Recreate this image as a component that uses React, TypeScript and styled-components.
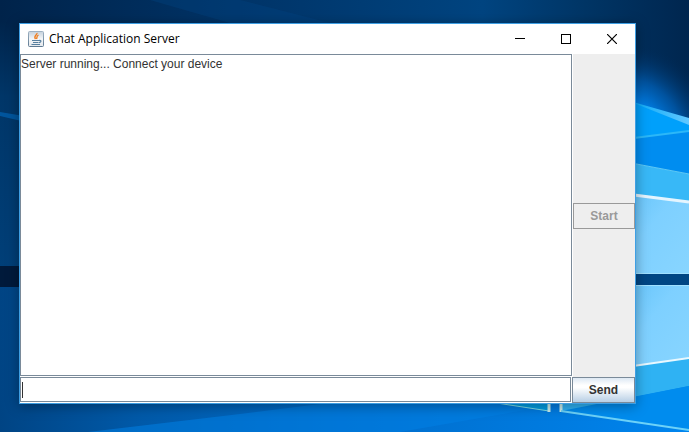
import React from "react";
import styled, { createGlobalStyle } from "styled-components";

const GlobalStyle = createGlobalStyle`
  *, *::before, *::after { box-sizing: border-box; }
  body { margin: 0; overflow: hidden; background: #003c7c; }
`;

const Desktop = styled.main`
  position: relative;
  display: flex;
  min-height: 100vh;
  padding: 23px 53px 28px 19px;
`;

const WallpaperSvg = styled.svg`
  position: absolute;
  inset: 0;
  width: 100%;
  height: 100%;
`;

const Window = styled.section`
  position: relative;
  flex: 1;
  display: flex;
  flex-direction: column;
  border: 1px solid #3e9fe4;
  background: #fff;
  box-shadow: 0 2px 12px rgba(0, 0, 0, 0.35);
`;

const TitleBar = styled.header`
  display: flex;
  align-items: center;
  height: 30px;
  padding-left: 8px;
`;

const Title = styled.h1`
  flex: 1;
  margin: 0 0 0 5px;
  color: #000;
  font: 400 12px/16px "Open Sans", "Noto Sans", sans-serif;
`;

const CaptionButton = styled.button`
  display: grid;
  place-items: center;
  width: 46px;
  height: 30px;
  padding: 0;
  border: 0;
  background: transparent;
`;

const Body = styled.div`
  flex: 1;
  display: flex;
  flex-direction: column;
`;

const ChatRow = styled.div`
  flex: 1;
  display: flex;
`;

const Log = styled.textarea`
  flex: 1;
  margin: 0 1px 1px 0;
  padding: 1px 0;
  border: 1px solid #7a8a99;
  border-radius: 0;
  outline: 0;
  resize: none;
  color: #333;
  background: #fff;
  font: 12px/16px "Liberation Sans", Arial, sans-serif;
`;

const SidePanel = styled.aside`
  display: flex;
  flex-direction: column;
  justify-content: center;
  width: 62px;
  background: #eee;
`;

const MessageForm = styled.form`
  display: flex;
  height: 26px;
`;

const Field = styled.div`
  position: relative;
  flex: 1;
  display: flex;
  padding: 0 1px 1px 0;
`;

const MessageInput = styled.input`
  flex: 1;
  min-width: 0;
  padding: 0 1px;
  border: 1px solid #7a8a99;
  border-radius: 0;
  outline: 0;
  color: #333;
  background: #fff;
  caret-color: transparent;
  font: 12px/16px "Liberation Sans", Arial, sans-serif;
`;

const Caret = styled.span`
  position: absolute;
  left: 2px;
  top: 5px;
  width: 1px;
  height: 16px;
  background: #333;
  pointer-events: none;
`;

const MetalButton = styled.button`
  height: 26px;
  padding: 0;
  border: 1px solid #7a8a99;
  border-radius: 0;
  color: #333;
  background: linear-gradient(#dde8f3 0%, #fff 30%, #fff 40%, #b8cfe5 100%);
  font: 700 12px/16px "Liberation Sans", Arial, sans-serif;

  &:disabled {
    border-color: #999;
    color: #999;
    background: #eee;
  }
`;

const SendButton = styled(MetalButton)`
  width: 63px;
`;

function Wallpaper() {
  return (
    <WallpaperSvg viewBox="0 0 689 432" preserveAspectRatio="none" aria-hidden="true">
      <defs>
        <linearGradient id="top" x1="0" x2="1">
          <stop offset="0" stopColor="#00234a" />
          <stop offset="0.35" stopColor="#003468" />
          <stop offset="0.7" stopColor="#004480" />
          <stop offset="0.85" stopColor="#003565" />
          <stop offset="1" stopColor="#00264f" />
        </linearGradient>
        <linearGradient id="left" x1="0" y1="0" x2="0" y2="1">
          <stop offset="0" stopColor="#00244b" />
          <stop offset="0.3" stopColor="#003668" />
          <stop offset="1" stopColor="#003f78" />
        </linearGradient>
        <linearGradient id="floor" x1="0" x2="1">
          <stop offset="0" stopColor="#004484" />
          <stop offset="0.2" stopColor="#0059a8" />
          <stop offset="0.5" stopColor="#006cca" />
          <stop offset="1" stopColor="#0085ee" />
        </linearGradient>
        <radialGradient id="glow" gradientUnits="userSpaceOnUse" cx="620" cy="142" r="100">
          <stop offset="0" stopColor="#0096ff" />
          <stop offset="0.4" stopColor="#0084f0" />
          <stop offset="0.65" stopColor="#005cb0" stopOpacity=".8" />
          <stop offset="1" stopColor="#002a57" stopOpacity="0" />
        </radialGradient>
        <linearGradient id="pane" x1="0" y1="0" x2="1" y2="1">
          <stop offset="0" stopColor="#66c4fa" />
          <stop offset="0.4" stopColor="#7ed0ff" />
          <stop offset="1" stopColor="#88d5ff" />
        </linearGradient>
        <linearGradient id="beam" x1="0" x2="1">
          <stop offset="0" stopColor="#00a6f6" />
          <stop offset="1" stopColor="#62c8ff" />
        </linearGradient>
      </defs>
      <rect width="689" height="432" fill="url(#top)" />
      <path d="M150 0H240L330 23H230Z" fill="#004584" opacity=".35" />
      <rect y="23" width="30" height="245" fill="url(#left)" />
      <path d="M0 112L30 117V123L0 116Z" fill="#0062b4" opacity=".7" />
      <rect y="266" width="30" height="21" fill="#001a3b" />
      <rect y="287" width="689" height="145" fill="url(#floor)" />
      <path d="M88 432L240 414L320 404H560L400 432Z" fill="#0080e4" opacity=".55" />
      <rect x="500" width="189" height="160" fill="url(#glow)" />
      <path d="M626 100L689 123V133L626 139Z" fill="#00a0fb" />
      <path d="M626 100L689 118V125Z" fill="url(#beam)" />
      <path d="M626 139L689 131V174L626 162Z" fill="#008df0" />
      <path d="M626 139L689 131" stroke="#2bb7f8" strokeWidth="2" />
      <path d="M626 162L689 174V202L626 194Z" fill="#38b8f7" />
      <path d="M626 162L689 174" stroke="#5ccafa" />
      <path d="M626 194L689 202V274H626Z" fill="url(#pane)" />
      <path d="M626 194L689 202" stroke="#e4f5ff" strokeWidth="3" />
      <rect x="626" y="274" width="63" height="11" fill="#004684" />
      <path d="M626 273.500H689M626 285.500H689" stroke="#a0e0ff" />
      <path d="M626 286H689V358L626 367Z" fill="url(#pane)" />
      <path d="M626 367L689 358V386L561 412V404H626Z" fill="#2fb2f3" />
      <path d="M626 367L689 358" stroke="#e8f8ff" strokeWidth="2" />
      <path d="M561 411L689 386V430Z" fill="#008cee" />
      <path d="M490 402L549 411V402" fill="#009be0" />
      <path d="M490 402L549 411" stroke="#7fdce6" strokeWidth="1" />
      <path d="M549 402V412" stroke="#c8ecec" strokeWidth="3" />
      <path d="M561 402V412" fill="none" stroke="#c8ecec" strokeWidth="3" />
      <path d="M561 411L689 430" fill="none" stroke="#6cd2f8" strokeWidth="2" />
    </WallpaperSvg>
  );
}

function JavaIcon() {
  return (
    <svg width="16" height="16" viewBox="0 0 16 16" aria-hidden="true">
      <defs>
        <linearGradient id="tile" x1="0" y1="0" x2="0" y2="1">
          <stop offset="0" stopColor="#c3d0dc" />
          <stop offset="0.5" stopColor="#f4f6f8" />
          <stop offset="1" stopColor="#e4e8ec" />
        </linearGradient>
        <linearGradient id="tileEdge" x1="0" y1="0" x2="0" y2="1">
          <stop offset="0" stopColor="#9fb2c3" />
          <stop offset="1" stopColor="#5f7a92" />
        </linearGradient>
      </defs>
      <rect x=".5" y=".5" width="15" height="15" rx="1" fill="url(#tile)" stroke="url(#tileEdge)" />
      <path d="M9 2C9.500 4 5 4.500 7.500 8M10.500 4C8 5.200 9.500 6 8.500 8" fill="none" stroke="#f07a18" strokeWidth="1.300" />
      <path d="M4 9.500H11M5 11.500H10.500M11 9.500C13.800 9 13.500 11 11 11.800M3.500 13.500H12" fill="none" stroke="#58809f" strokeWidth="1.100" />
    </svg>
  );
}

export default function App() {
  return (
    <>
      <GlobalStyle />
      <Desktop>
        <Wallpaper />
        <Window>
          <TitleBar>
            <JavaIcon />
            <Title>Chat Application Server</Title>
            <CaptionButton aria-label="Minimize">
              <svg width="10" height="10" shapeRendering="crispEdges"><path d="M0 4.500H10" stroke="#000" /></svg>
            </CaptionButton>
            <CaptionButton aria-label="Maximize">
              <svg width="10" height="10" shapeRendering="crispEdges"><rect x=".5" y=".5" width="9" height="9" fill="none" stroke="#000" /></svg>
            </CaptionButton>
            <CaptionButton aria-label="Close">
              <svg width="10" height="10"><path d="M0 0L10 10M10 0L0 10" stroke="#000" strokeWidth="1.200" /></svg>
            </CaptionButton>
          </TitleBar>
          <Body>
            <ChatRow>
              <Log aria-label="Chat log" readOnly defaultValue="Server running... Connect your device" />
              <SidePanel>
                <MetalButton disabled>Start</MetalButton>
              </SidePanel>
            </ChatRow>
            <MessageForm onSubmit={(event: React.FormEvent) => event.preventDefault()}>
              <Field>
                <MessageInput aria-label="Message" autoFocus />
                <Caret />
              </Field>
              <SendButton type="submit">Send</SendButton>
            </MessageForm>
          </Body>
        </Window>
      </Desktop>
    </>
  );
}
